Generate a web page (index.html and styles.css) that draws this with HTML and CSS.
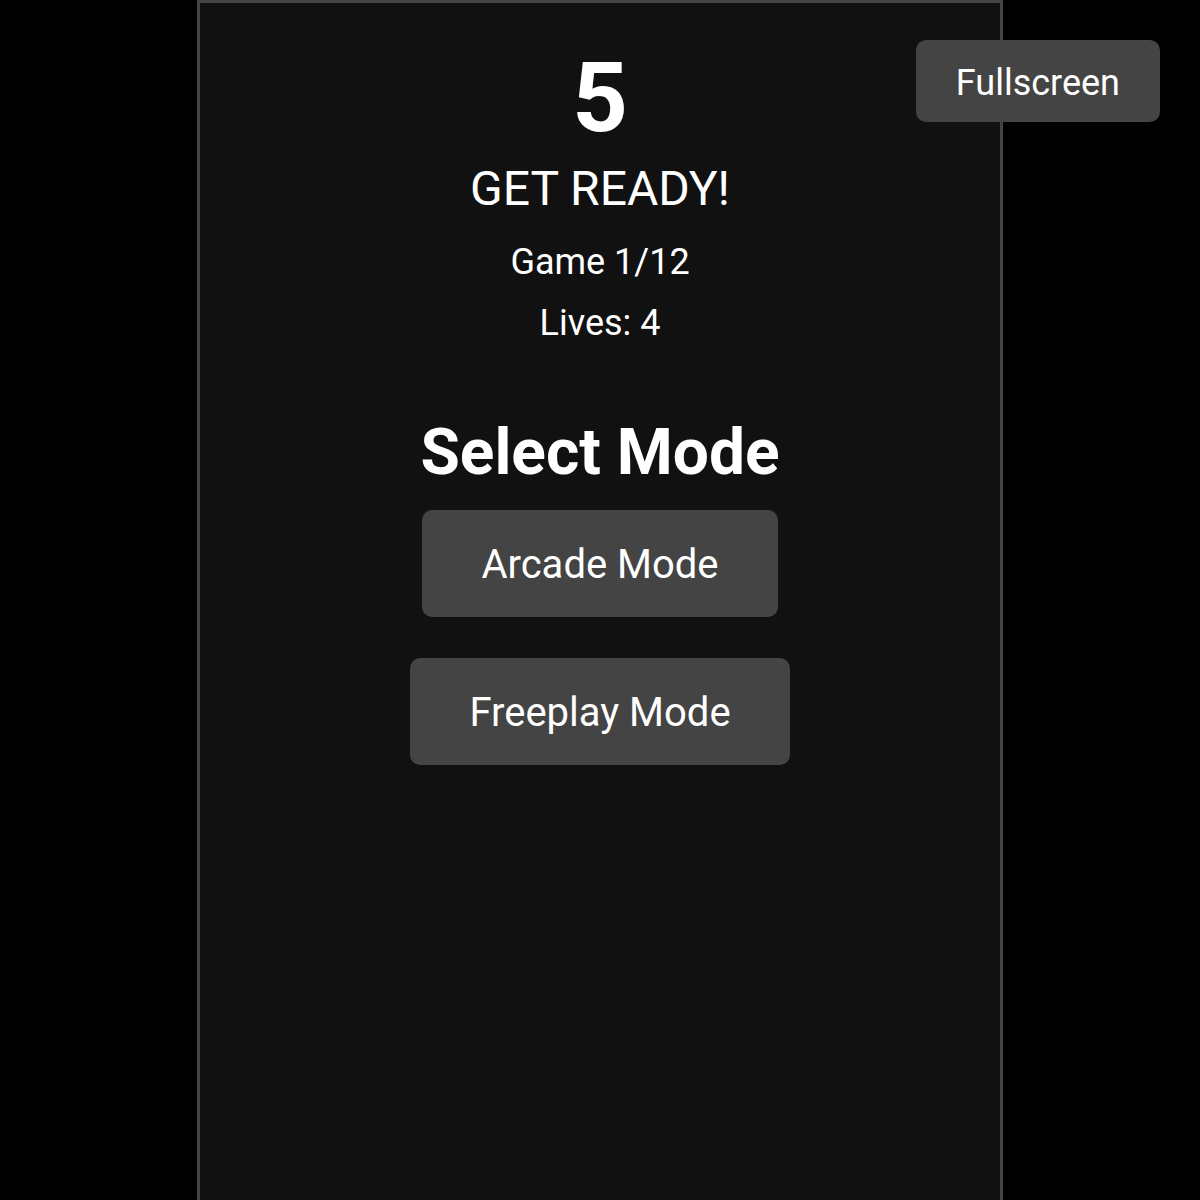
FILE: index.html
```html
<!DOCTYPE html>
<html lang="en">
<head>
<meta charset="utf-8">
<title>Get Ready</title>
<link rel="stylesheet" href="styles.css">
</head>
<body>
  <main class="game">
    <div class="countdown">5</div>
    <div class="status">GET READY!</div>
    <div class="info info-game">Game 1/12</div>
    <div class="info info-lives">Lives: 4</div>
    <h1 class="mode-title">Select Mode</h1>
    <div class="modes">
      <button class="btn mode-btn">Arcade Mode</button>
      <button class="btn mode-btn">Freeplay Mode</button>
    </div>
  </main>
  <button class="btn fullscreen-btn">Fullscreen</button>
</body>
</html>
```
FILE: styles.css
```css
html, body {
  margin: 0;
  padding: 0;
  background: #000;
  height: 100%;
  overflow: hidden;
}

body {
  font-family: Roboto, "Liberation Sans", sans-serif;
  color: #fff;
}

.game {
  box-sizing: border-box;
  width: 806px;
  min-height: 100vh;
  margin: 0 auto;
  background: #111;
  border: 3px solid #444;
  border-bottom: none;
  display: flex;
  flex-direction: column;
  align-items: center;
  text-align: center;
  padding-top: 38px;
}

.countdown {
  font-size: 97px;
  font-weight: 700;
  line-height: normal;
}

.status {
  font-size: 48px;
  margin-top: 5px;
  line-height: normal;
}

.info {
  font-size: 36px;
  line-height: normal;
}

.info-game {
  margin-top: 24px;
}

.info-lives {
  margin-top: 19px;
}

.mode-title {
  font-size: 64px;
  font-weight: 700;
  margin: 71px 0 0;
  line-height: normal;
}

.modes {
  margin-top: 20px;
  display: flex;
  flex-direction: column;
  align-items: center;
  gap: 41px;
}

.btn {
  font-family: Roboto, "Liberation Sans", sans-serif;
  background: #444;
  color: #fff;
  border: none;
  border-radius: 10px;
  cursor: pointer;
}

.mode-btn {
  font-size: 40px;
  line-height: 47px;
  padding: 31px 59px 29px;
}

.fullscreen-btn {
  position: fixed;
  top: 40px;
  right: 40px;
  font-size: 36px;
  line-height: 42px;
  padding: 22px 40px 18px;
}
```
